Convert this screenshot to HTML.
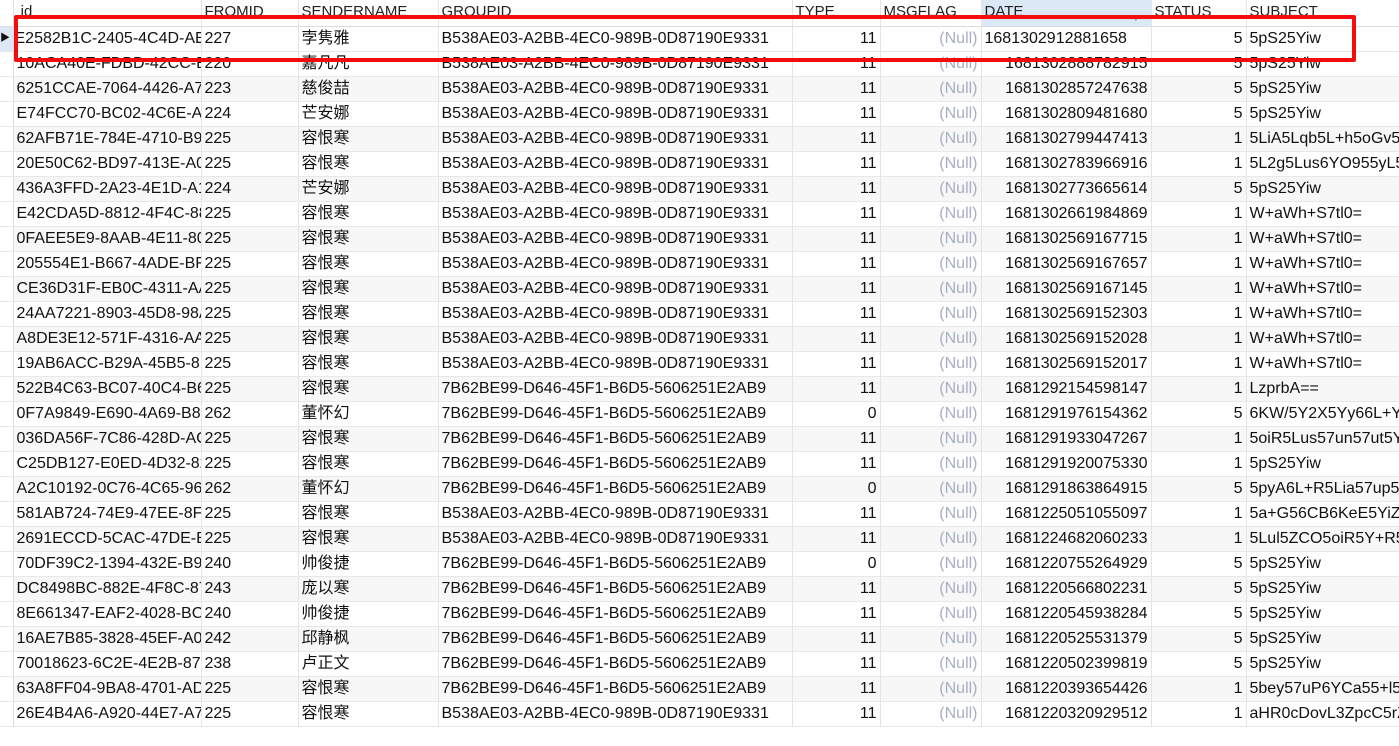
<!DOCTYPE html>
<html><head><meta charset="utf-8"><style>
body{margin:0;width:1399px;height:746px;overflow:hidden;background:#fff;font-family:"Liberation Sans","Noto Sans CJK SC",sans-serif;font-size:16px;color:#111;position:relative}
table{border-collapse:collapse;table-layout:fixed;position:absolute;left:0;top:0;width:1420px}
td{height:24px;padding:0 3px;border-right:1px solid #e4e4e4;border-bottom:1px solid #e8e8e8;white-space:nowrap;overflow:hidden;text-overflow:clip;line-height:24px}
th{height:26px;padding:0 3px;border-right:1px solid #e4e4e4;border-bottom:1px solid #dcdcdc;font-weight:normal;text-align:left;line-height:24px;color:#222;vertical-align:top;overflow:hidden;background:#fff;font-size:15px}
th span{position:relative;top:0px}
th.ds{background:#dbe8f6}
td.ind,th.ind{padding:0;background:#fff;border-right:1px solid #ddd}
tr.g td{background:#f7f7f7}
tr.g td.ind{background:#fff}
.r{text-align:right}
.n{color:#a8afc4;text-align:right}
#box{position:absolute;left:14px;top:15px;width:1334px;height:39px;border:4px solid #f40d0d;border-radius:2px}
</style></head><body>
<table>
<colgroup><col style="width:13px"><col style="width:188px"><col style="width:97px"><col style="width:140px"><col style="width:354px"><col style="width:88px"><col style="width:101px"><col style="width:170px"><col style="width:95px"><col style="width:174px"></colgroup>
<tr><th class="ind"></th><th><span>&nbsp;id</span></th><th><span>FROMID</span></th><th><span>SENDERNAME</span></th><th><span>GROUPID</span></th><th><span>TYPE</span></th><th><span>MSGFLAG</span></th><th class="ds"><span>DATE</span><span style="position:absolute;left:1131px;top:7px;font-size:10px;color:#888">▼</span></th><th><span>STATUS</span></th><th><span>SUBJECT</span></th></tr>
<tr><td class="ind" style="background:#dce8f5;font-size:10px">▶</td><td style="padding-left:1px">E2582B1C-2405-4C4D-AE71</td><td>227</td><td>孛隽雅</td><td>B538AE03-A2BB-4EC0-989B-0D87190E9331</td><td class="r">11</td><td class="n">(Null)</td><td>1681302912881658</td><td class="r">5</td><td>5pS25Yiw</td></tr>
<tr><td class="ind"></td><td>10ACA40E-FDBD-42CC-B7A1</td><td>220</td><td>嘉凡凡</td><td>B538AE03-A2BB-4EC0-989B-0D87190E9331</td><td class="r">11</td><td class="n">(Null)</td><td class="r">1681302888782915</td><td class="r">5</td><td>5pS25Yiw</td></tr>
<tr class="g"><td class="ind"></td><td>6251CCAE-7064-4426-A7B1</td><td>223</td><td>慈俊喆</td><td>B538AE03-A2BB-4EC0-989B-0D87190E9331</td><td class="r">11</td><td class="n">(Null)</td><td class="r">1681302857247638</td><td class="r">5</td><td>5pS25Yiw</td></tr>
<tr><td class="ind"></td><td>E74FCC70-BC02-4C6E-A3A1</td><td>224</td><td>芒安娜</td><td>B538AE03-A2BB-4EC0-989B-0D87190E9331</td><td class="r">11</td><td class="n">(Null)</td><td class="r">1681302809481680</td><td class="r">5</td><td>5pS25Yiw</td></tr>
<tr class="g"><td class="ind"></td><td>62AFB71E-784E-4710-B9A1</td><td>225</td><td>容恨寒</td><td>B538AE03-A2BB-4EC0-989B-0D87190E9331</td><td class="r">11</td><td class="n">(Null)</td><td class="r">1681302799447413</td><td class="r">1</td><td>5LiA5Lqb5L+h5oGv5</td></tr>
<tr><td class="ind"></td><td>20E50C62-BD97-413E-A0A1</td><td>225</td><td>容恨寒</td><td>B538AE03-A2BB-4EC0-989B-0D87190E9331</td><td class="r">11</td><td class="n">(Null)</td><td class="r">1681302783966916</td><td class="r">1</td><td>5L2g5Lus6YO955yL5</td></tr>
<tr class="g"><td class="ind"></td><td>436A3FFD-2A23-4E1D-A1A1</td><td>224</td><td>芒安娜</td><td>B538AE03-A2BB-4EC0-989B-0D87190E9331</td><td class="r">11</td><td class="n">(Null)</td><td class="r">1681302773665614</td><td class="r">5</td><td>5pS25Yiw</td></tr>
<tr><td class="ind"></td><td>E42CDA5D-8812-4F4C-88A1</td><td>225</td><td>容恨寒</td><td>B538AE03-A2BB-4EC0-989B-0D87190E9331</td><td class="r">11</td><td class="n">(Null)</td><td class="r">1681302661984869</td><td class="r">1</td><td>W+aWh+S7tl0=</td></tr>
<tr class="g"><td class="ind"></td><td>0FAEE5E9-8AAB-4E11-80A1</td><td>225</td><td>容恨寒</td><td>B538AE03-A2BB-4EC0-989B-0D87190E9331</td><td class="r">11</td><td class="n">(Null)</td><td class="r">1681302569167715</td><td class="r">1</td><td>W+aWh+S7tl0=</td></tr>
<tr><td class="ind"></td><td>205554E1-B667-4ADE-BFC1</td><td>225</td><td>容恨寒</td><td>B538AE03-A2BB-4EC0-989B-0D87190E9331</td><td class="r">11</td><td class="n">(Null)</td><td class="r">1681302569167657</td><td class="r">1</td><td>W+aWh+S7tl0=</td></tr>
<tr class="g"><td class="ind"></td><td>CE36D31F-EB0C-4311-AAA1</td><td>225</td><td>容恨寒</td><td>B538AE03-A2BB-4EC0-989B-0D87190E9331</td><td class="r">11</td><td class="n">(Null)</td><td class="r">1681302569167145</td><td class="r">1</td><td>W+aWh+S7tl0=</td></tr>
<tr><td class="ind"></td><td>24AA7221-8903-45D8-98A1</td><td>225</td><td>容恨寒</td><td>B538AE03-A2BB-4EC0-989B-0D87190E9331</td><td class="r">11</td><td class="n">(Null)</td><td class="r">1681302569152303</td><td class="r">1</td><td>W+aWh+S7tl0=</td></tr>
<tr class="g"><td class="ind"></td><td>A8DE3E12-571F-4316-AAA1</td><td>225</td><td>容恨寒</td><td>B538AE03-A2BB-4EC0-989B-0D87190E9331</td><td class="r">11</td><td class="n">(Null)</td><td class="r">1681302569152028</td><td class="r">1</td><td>W+aWh+S7tl0=</td></tr>
<tr><td class="ind"></td><td>19AB6ACC-B29A-45B5-8EA1</td><td>225</td><td>容恨寒</td><td>B538AE03-A2BB-4EC0-989B-0D87190E9331</td><td class="r">11</td><td class="n">(Null)</td><td class="r">1681302569152017</td><td class="r">1</td><td>W+aWh+S7tl0=</td></tr>
<tr class="g"><td class="ind"></td><td>522B4C63-BC07-40C4-B61A</td><td>225</td><td>容恨寒</td><td>7B62BE99-D646-45F1-B6D5-5606251E2AB9</td><td class="r">11</td><td class="n">(Null)</td><td class="r">1681292154598147</td><td class="r">1</td><td>LzprbA==</td></tr>
<tr><td class="ind"></td><td>0F7A9849-E690-4A69-B82A</td><td>262</td><td>董怀幻</td><td>7B62BE99-D646-45F1-B6D5-5606251E2AB9</td><td class="r">0</td><td class="n">(Null)</td><td class="r">1681291976154362</td><td class="r">5</td><td>6KW/5Y2X5Yy66L+Y</td></tr>
<tr class="g"><td class="ind"></td><td>036DA56F-7C86-428D-AC1A</td><td>225</td><td>容恨寒</td><td>7B62BE99-D646-45F1-B6D5-5606251E2AB9</td><td class="r">11</td><td class="n">(Null)</td><td class="r">1681291933047267</td><td class="r">1</td><td>5oiR5Lus57un57ut5Y</td></tr>
<tr><td class="ind"></td><td>C25DB127-E0ED-4D32-821A</td><td>225</td><td>容恨寒</td><td>7B62BE99-D646-45F1-B6D5-5606251E2AB9</td><td class="r">11</td><td class="n">(Null)</td><td class="r">1681291920075330</td><td class="r">1</td><td>5pS25Yiw</td></tr>
<tr class="g"><td class="ind"></td><td>A2C10192-0C76-4C65-961A</td><td>262</td><td>董怀幻</td><td>7B62BE99-D646-45F1-B6D5-5606251E2AB9</td><td class="r">0</td><td class="n">(Null)</td><td class="r">1681291863864915</td><td class="r">5</td><td>5pyA6L+R5Lia57up5</td></tr>
<tr><td class="ind"></td><td>581AB724-74E9-47EE-8F01</td><td>225</td><td>容恨寒</td><td>B538AE03-A2BB-4EC0-989B-0D87190E9331</td><td class="r">11</td><td class="n">(Null)</td><td class="r">1681225051055097</td><td class="r">1</td><td>5a+G56CB6KeE5YiZ7</td></tr>
<tr class="g"><td class="ind"></td><td>2691ECCD-5CAC-47DE-BC01</td><td>225</td><td>容恨寒</td><td>B538AE03-A2BB-4EC0-989B-0D87190E9331</td><td class="r">11</td><td class="n">(Null)</td><td class="r">1681224682060233</td><td class="r">1</td><td>5Lul5ZCO5oiR5Y+R5</td></tr>
<tr><td class="ind"></td><td>70DF39C2-1394-432E-B9C1</td><td>240</td><td>帅俊捷</td><td>7B62BE99-D646-45F1-B6D5-5606251E2AB9</td><td class="r">0</td><td class="n">(Null)</td><td class="r">1681220755264929</td><td class="r">5</td><td>5pS25Yiw</td></tr>
<tr class="g"><td class="ind"></td><td>DC8498BC-882E-4F8C-8741</td><td>243</td><td>庞以寒</td><td>7B62BE99-D646-45F1-B6D5-5606251E2AB9</td><td class="r">11</td><td class="n">(Null)</td><td class="r">1681220566802231</td><td class="r">5</td><td>5pS25Yiw</td></tr>
<tr><td class="ind"></td><td>8E661347-EAF2-4028-BC61</td><td>240</td><td>帅俊捷</td><td>7B62BE99-D646-45F1-B6D5-5606251E2AB9</td><td class="r">11</td><td class="n">(Null)</td><td class="r">1681220545938284</td><td class="r">5</td><td>5pS25Yiw</td></tr>
<tr class="g"><td class="ind"></td><td>16AE7B85-3828-45EF-A0B1</td><td>242</td><td>邱静枫</td><td>7B62BE99-D646-45F1-B6D5-5606251E2AB9</td><td class="r">11</td><td class="n">(Null)</td><td class="r">1681220525531379</td><td class="r">5</td><td>5pS25Yiw</td></tr>
<tr><td class="ind"></td><td>70018623-6C2E-4E2B-87E1</td><td>238</td><td>卢正文</td><td>7B62BE99-D646-45F1-B6D5-5606251E2AB9</td><td class="r">11</td><td class="n">(Null)</td><td class="r">1681220502399819</td><td class="r">5</td><td>5pS25Yiw</td></tr>
<tr class="g"><td class="ind"></td><td>63A8FF04-9BA8-4701-AD11</td><td>225</td><td>容恨寒</td><td>7B62BE99-D646-45F1-B6D5-5606251E2AB9</td><td class="r">11</td><td class="n">(Null)</td><td class="r">1681220393654426</td><td class="r">1</td><td>5bey57uP6YCa55+l5</td></tr>
<tr><td class="ind"></td><td>26E4B4A6-A920-44E7-A711</td><td>225</td><td>容恨寒</td><td>B538AE03-A2BB-4EC0-989B-0D87190E9331</td><td class="r">11</td><td class="n">(Null)</td><td class="r">1681220320929512</td><td class="r">1</td><td>aHR0cDovL3ZpcC5rZ</td></tr>
</table>
<div id="box"></div>
</body></html>
